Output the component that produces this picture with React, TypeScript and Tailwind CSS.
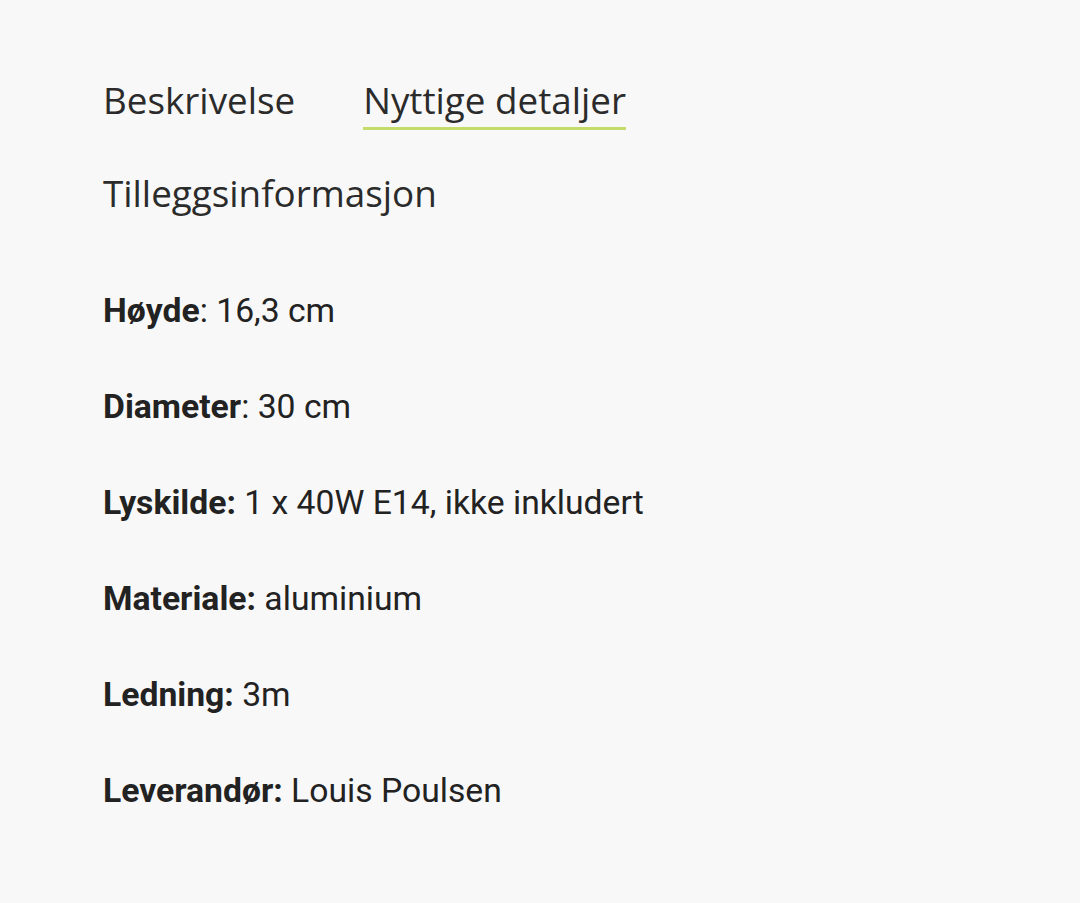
import React from "react";

const details: { label: string; value: string; colonInside?: boolean }[] = [
  { label: "Høyde", value: "16,3 cm" },
  { label: "Diameter", value: "30 cm" },
  { label: "Lyskilde:", value: "1 x 40W E14, ikke inkludert", colonInside: true },
  { label: "Materiale:", value: "aluminium", colonInside: true },
  { label: "Ledning:", value: "3m", colonInside: true },
  { label: "Leverandør:", value: "Louis Poulsen", colonInside: true },
];

export default function App() {
  return (
    <div className="min-h-[903px] w-full bg-[#f8f8f8] pl-[103px] pt-[75px] text-[#222]">
      <div className="flex gap-[68px] font-['Open_Sans',sans-serif] text-[36.8px] leading-[50px] text-[#2b2b2b]">
        <button className="pb-[5px]">Beskrivelse</button>
        <button className="border-b-[3px] border-[#c3dc6a] pb-[2px]">
          Nyttige detaljer
        </button>
      </div>
      <h2 className="mt-[38px] font-['Open_Sans',sans-serif] text-[36.8px] leading-[50px] text-[#2b2b2b]">
        Tilleggsinformasjon
      </h2>
      <div className="mt-[67px] flex flex-col gap-[45px] font-['Roboto',sans-serif] text-[33.7px] leading-[51px]">
        {details.map((d) => (
          <p key={d.label}>
            <strong className="font-bold">{d.label}</strong>
            {d.colonInside ? " " : ": "}
            {d.value}
          </p>
        ))}
      </div>
    </div>
  );
}
